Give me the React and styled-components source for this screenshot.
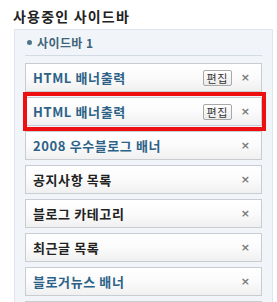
import React from "react";
import styled, { createGlobalStyle } from "styled-components";

const Global = createGlobalStyle`
  body {
    margin: 0;
    background: #ffffff;
    font-family: "Noto Sans CJK KR", "Noto Sans", sans-serif;
  }
`;

const Page = styled.div`
  width: 277px;
  height: 302px;
  overflow: hidden;
  padding-top: 8px;
  box-sizing: border-box;
`;

const Title = styled.h3`
  margin: 0 0 4px 13px;
  font-size: 14px;
  line-height: 17px;
  font-weight: bold;
  color: #222222;
  letter-spacing: 1.2px;
`;

const Panel = styled.div`
  margin-left: 14px;
  width: 259px;
  box-sizing: border-box;
  background: #f1f5f9;
  border: 1px solid #dde5ed;
  border-bottom: none;
  padding: 0 10px;
  height: 300px;
`;

const Heading = styled.div`
  display: flex;
  align-items: center;
  gap: 5px;
  height: 25px;
  border-bottom: 1px solid #d3dbe3;
  padding-left: 2px;
  font-size: 12px;
  font-weight: bold;
  color: #3f6479;
  letter-spacing: 0.4px;
  margin-bottom: 7px;
`;

const Dot = styled.span`
  width: 5px;
  height: 5px;
  border-radius: 50%;
  background: #4f7588;
`;

const List = styled.div`
  display: flex;
  flex-direction: column;
  gap: 5px;
`;

const Item = styled.div`
  position: relative;
  height: 29px;
  flex-shrink: 0;
  box-sizing: border-box;
  border: 1px solid #c9cdd1;
  background: linear-gradient(#ffffff 0%, #fbfbfb 50%, #f0f0f0 100%);
  display: flex;
  align-items: center;
  padding: 0 11px 0 7px;
  font-size: 13px;
  font-weight: bold;
  color: ${({ $blue }) => ($blue ? "#2c6288" : "#222222")};
`;

const Name = styled.span`
  flex: 1;
  letter-spacing: 0.6px;
`;

const EditButton = styled.span`
  height: 16px;
  box-sizing: border-box;
  padding: 0 3px;
  border: 1px solid #a8a8a8;
  border-radius: 2px;
  background: linear-gradient(#ffffff, #ececec);
  font-size: 11px;
  font-weight: normal;
  line-height: 14px;
  letter-spacing: 0.5px;
  color: #333333;
  margin-right: 9px;
`;

const Close = styled.span`
  font-size: 11px;
  font-weight: bold;
  line-height: 1;
  color: #7a7a7a;
  font-family: "DejaVu Sans", sans-serif;
`;

const Highlight = styled.div`
  position: absolute;
  left: -3px;
  right: -5px;
  top: -6px;
  bottom: -6px;
  border: 4px solid #ee1010;
  pointer-events: none;
`;

const widgets = [
  { name: "HTML 배너출력", blue: true, edit: true },
  { name: "HTML 배너출력", blue: true, edit: true, marked: true },
  { name: "2008 우수블로그 배너", blue: true },
  { name: "공지사항 목록" },
  { name: "블로그 카테고리" },
  { name: "최근글 목록" },
  { name: "블로거뉴스 배너", blue: true },
];

export default function App() {
  return (
    <Page>
      <Global />
      <Title>사용중인 사이드바</Title>
      <Panel>
        <Heading>
          <Dot />
          사이드바 1
        </Heading>
        <List>
          {widgets.map((w, i) => (
            <Item key={i} $blue={w.blue}>
              <Name>{w.name}</Name>
              {w.edit && <EditButton>편집</EditButton>}
              <Close>×</Close>
              {w.marked && <Highlight />}
            </Item>
          ))}
          {/* next widget, only its top edge is in view */}
          <Item />
        </List>
      </Panel>
    </Page>
  );
}
